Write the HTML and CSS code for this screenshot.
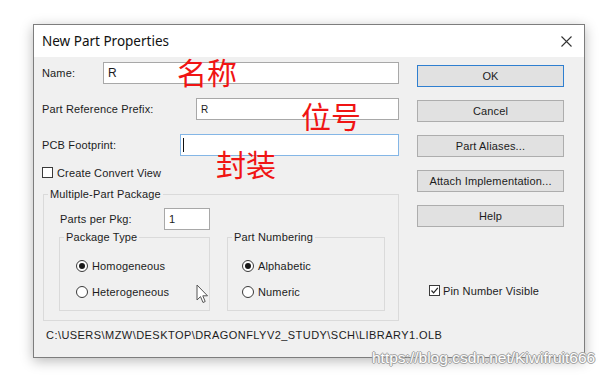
FILE: index.html
```html
<!DOCTYPE html>
<html>
<head>
<meta charset="utf-8">
<link rel="stylesheet" href="styles.css">
</head>
<body>
<div class="dialog">
  <div class="titlebar">
    <span class="title">New Part Properties</span>
    <svg class="close" width="11" height="11" viewBox="0 0 11 11"><path d="M0.5 0.5 L10.5 10.5 M10.5 0.5 L0.5 10.5" stroke="#333" stroke-width="1.1" fill="none"/></svg>
  </div>
  <div class="content">
    <div class="main">
      <div class="left">
        <div class="row r1"><span class="label l-name">Name:</span><div class="field"><span class="val big">R</span></div></div>
        <div class="row r2"><span class="label l-prefix">Part Reference Prefix:</span><div class="field"><span class="val small">R</span></div></div>
        <div class="row r3"><span class="label l-fp">PCB Footprint:</span><div class="field focus"><span class="caret"></span></div></div>
        <div class="checkrow"><span class="check"></span><span>Create Convert View</span></div>
        <fieldset class="group outer">
          <legend>Multiple-Part Package</legend>
          <div class="outer-body">
            <div class="pkgrow"><span class="l-ppk">Parts per Pkg:</span><div class="field small-field"><span class="val">1</span></div></div>
            <div class="inner-row">
              <fieldset class="group ptype">
                <legend>Package Type</legend>
                <div class="radios">
                  <div class="radio-row"><span class="radio on"></span><span>Homogeneous</span></div>
                  <div class="radio-row"><span class="radio"></span><span>Heterogeneous</span></div>
                </div>
              </fieldset>
              <fieldset class="group pnum">
                <legend>Part Numbering</legend>
                <div class="radios">
                  <div class="radio-row"><span class="radio on"></span><span>Alphabetic</span></div>
                  <div class="radio-row"><span class="radio"></span><span>Numeric</span></div>
                </div>
              </fieldset>
            </div>
          </div>
        </fieldset>
      </div>
      <div class="right">
        <div class="btn default">OK</div>
        <div class="btn">Cancel</div>
        <div class="btn">Part Aliases...</div>
        <div class="btn">Attach Implementation...</div>
        <div class="btn">Help</div>
        <div class="checkrow pin"><span class="check checked"><svg width="9" height="9" viewBox="0 0 9 9"><path d="M1.5 4.5 L3.6 6.8 L7.8 1.8" stroke="#222" stroke-width="1.2" fill="none"/></svg></span><span>Pin Number Visible</span></div>
      </div>
    </div>
    <div class="path">C:\USERS\MZW\DESKTOP\DRAGONFLYV2_STUDY\SCH\LIBRARY1.OLB</div>
  </div>
</div>

<span class="note n1">名称</span>
<span class="note n2">位号</span>
<span class="note n3">封装</span>

<svg class="cursor" width="13" height="20" viewBox="0 0 13 20"><path d="M1 1 L1 16 L4.5 12.6 L7 18.5 L9.2 17.5 L6.8 11.8 L11.5 11.8 Z" fill="#fff" stroke="#555" stroke-width="1" stroke-linejoin="round"/></svg>

<div class="watermark">https://blog.csdn.net/Kiwifruit666</div>
</body>
</html>
```

FILE: styles.css
```css
* { box-sizing: border-box; }
html, body { margin: 0; padding: 0; background: #fff; }
body {
  width: 610px; height: 377px; overflow: hidden; position: relative;
  font-family: "Liberation Sans", Arial, sans-serif; font-size: 11px; color: #1c1c1c;
  letter-spacing: 0.15px;
}
.dialog {
  margin: 24px 0 0 33px; width: 552px; height: 334px;
  border: 1px solid #7d7d7d; background: #f0f0f0;
  box-shadow: 0 3px 12px rgba(0,0,0,0.28);
  display: flex; flex-direction: column;
}
.titlebar {
  height: 32px; background: #fff; display: flex; align-items: center;
  justify-content: space-between; padding: 0 12px 0 8px;
}
.title { font-family: "Noto Sans", sans-serif; font-size: 13.5px; color: #111; letter-spacing: 0; }
.content { flex: 1; display: flex; flex-direction: column; }
.main { display: flex; gap: 18px; }
.left { width: 365px; padding-left: 8px; }
.row { display: flex; align-items: center; height: 22px; }
.r1 { margin-top: 5px; }
.r2, .r3 { margin-top: 14px; }
.label { flex: none; }
.l-name { width: 61px; }
.l-prefix { width: 154px; }
.l-fp { width: 138px; }
.field {
  flex: 1; height: 22px; background: #fff; border: 1px solid #a8a8a8;
  padding-left: 4px; display: flex; align-items: center;
}
.field.focus { border-color: #84b6e6; padding-left: 2px; }
.val.big { font-size: 12px; }
.val.small { font-size: 10px; padding-left: 0; }
.caret { width: 1px; height: 14px; background: #111; }
.checkrow { display: flex; align-items: center; height: 13px; margin-top: 10px; }
.check {
  width: 11px; height: 11px; border: 1px solid #3a3a3a; background: #fff;
  margin-right: 4px; display: flex; align-items: center; justify-content: center;
}
.group { border: 1px solid #dadada; margin: 0; padding: 0; min-width: 0; }
.group legend { padding: 0 2px; margin-left: 4px; line-height: 13px; }
.outer { margin: 9px 0 0 1px; width: 356px; }
.outer-body { padding: 7px 0 9px 15px; }
.pkgrow { display: flex; align-items: center; height: 22px; }
.l-ppk { width: 105px; padding-left: 1px; }
.small-field { flex: none; width: 46px; }
.inner-row { display: flex; gap: 17px; margin-top: 1px; }
.ptype { width: 151px; height: 80px; }
.pnum { width: 158px; height: 80px; }
.ptype .radios { padding: 15px 0 0 16px; }
.pnum .radios { padding: 15px 0 0 14px; }
.radio-row { display: flex; align-items: center; height: 14px; }
.radio-row + .radio-row { margin-top: 12px; }
.radio {
  width: 12px; height: 12px; border-radius: 50%; border: 1px solid #3a3a3a;
  background: #fff; margin-right: 4px; position: relative; flex: none;
}
.radio.on::after {
  content: ""; position: absolute; left: 2px; top: 2px; width: 6px; height: 6px;
  border-radius: 50%; background: #1a1a1a;
}
.right { width: 147px; padding-top: 8px; display: flex; flex-direction: column; }
.btn {
  height: 22px; background: #e1e1e1; border: 1px solid #adadad;
  display: flex; align-items: center; justify-content: center; margin-bottom: 13px;
}
.btn.default { border-color: #2f7fd0; }
.pin { margin-top: 44px; padding-left: 12px; }
.pin .check { margin-right: 3px; }
.path { margin-top: 8px; padding-left: 12px; line-height: 13px; letter-spacing: 0.45px; }
.note {
  position: absolute; font-family: "Noto Sans CJK SC", sans-serif; font-size: 30px;
  line-height: 1; color: #f01414; letter-spacing: 0;
}
.n1 { left: 177px; top: 56px; }
.n2 { left: 301px; top: 100px; }
.n3 { left: 216px; top: 148px; }
.cursor { position: absolute; left: 196px; top: 284px; }
.watermark {
  position: absolute; left: 372px; top: 349px; font-size: 15.5px; color: #fff; letter-spacing: 0;
  text-shadow: 0 0 1px #888, 1px 0 0 #aaa, -1px 0 0 #aaa, 0 1px 0 #aaa, 0 -1px 0 #aaa;
}
```
